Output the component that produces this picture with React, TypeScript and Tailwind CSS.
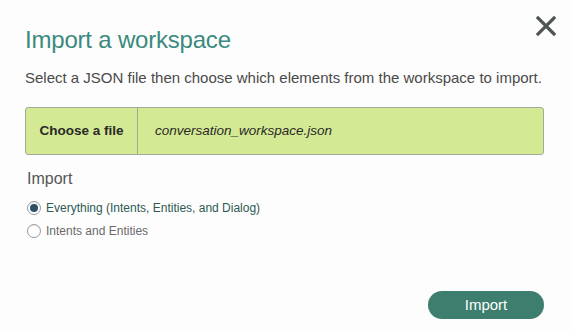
import React from 'react';

// ── Import workspace dialog ───────────────────────────────────────────────────

const CloseIcon: React.FC = () => (
  <svg width="20" height="20" viewBox="0 0 20 20" fill="none">
    <path d="M2 2 L18 18 M18 2 L2 18" stroke="#4f5553" strokeWidth="3.2" strokeLinecap="square" />
  </svg>
);

interface RadioProps {
  label: string;
  checked?: boolean;
}

const Radio: React.FC<RadioProps> = ({ label, checked }) => (
  <label className="flex items-center gap-[5px] h-[23px]">
    <span className="w-[14px] h-[14px] rounded-full border border-[#9a9a9a] bg-white flex items-center justify-center shadow-[inset_0_1px_1px_rgba(0,0,0,0.1)]">
      {checked && <span className="w-[8px] h-[8px] rounded-full bg-[#2f4f66]" />}
    </span>
    <span className={checked ? 'text-[12px] text-[#2d5a52]' : 'text-[12px] text-[#6a6a6a]'}>{label}</span>
  </label>
);

export default function App() {
  return (
    <div
      className="w-[571px] h-[332px] bg-[#fdfdfd] relative px-[25px] pt-[25px]"
      style={{ fontFamily: '"Liberation Sans", Arial, sans-serif' }}
    >
      {/* Close */}
      <button className="absolute top-[16px] right-[15px]">
        <CloseIcon />
      </button>

      <h1 className="text-[24px] leading-[30px] text-[#3a8a7e] tracking-[-0.2px]">Import a workspace</h1>
      <p className="mt-[13px] text-[15px] leading-[20px] text-[#4a4a4a]">
        Select a JSON file then choose which elements from the workspace to import.
      </p>

      {/* File picker */}
      <div className="mt-[19px] w-[519px] h-[48px] flex rounded-[3px] border border-[#a3a89a] bg-[#d3e993]">
        <div className="w-[112px] border-r border-[#a3a89a] flex items-center justify-center text-[13.5px] font-bold text-[#2a2a2a]">
          Choose a file
        </div>
        <div className="flex items-center pl-[17px] text-[13.5px] italic text-[#2a2a2a]">conversation_workspace.json</div>
      </div>

      <div className="mt-[14px] pl-[2px] text-[16px] leading-[20px] text-[#555]">Import</div>
      <div className="mt-[7px] pl-[2px] flex flex-col">
        <Radio label="Everything (Intents, Entities, and Dialog)" checked />
        <Radio label="Intents and Entities" />
      </div>

      {/* Footer */}
      <div className="absolute right-[27px] bottom-[13px]">
        <button className="w-[116px] h-[28px] rounded-full bg-[#3e7e6e] text-white text-[15px]">Import</button>
      </div>
    </div>
  );
}
